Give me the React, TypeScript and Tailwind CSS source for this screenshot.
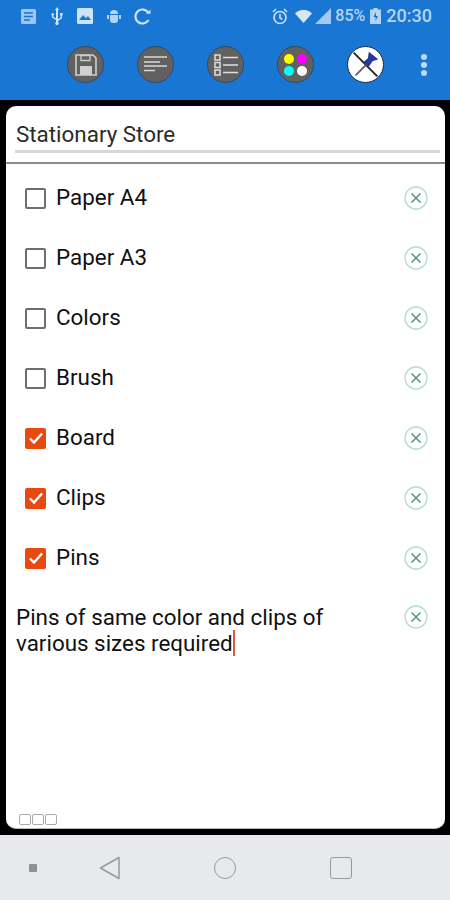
import React from "react";

const items = [
  { label: "Paper A4", done: false },
  { label: "Paper A3", done: false },
  { label: "Colors", done: false },
  { label: "Brush", done: false },
  { label: "Board", done: true },
  { label: "Clips", done: true },
  { label: "Pins", done: true },
];

function RemoveIcon() {
  return (
    <svg width="24" height="24" viewBox="0 0 24 24" fill="none" className="shrink-0">
      <circle cx="12" cy="12" r="11" stroke="#b5dcd3" strokeWidth="1.3" />
      <path d="M7.5 7.5l9 9M16.5 7.5l-9 9" stroke="#4f9488" strokeWidth="1.5" />
    </svg>
  );
}

function CheckBox({ done }: { done: boolean }) {
  if (done) {
    return (
      <div className="w-[21px] h-[21px] rounded-[2px] bg-[#e8490f] flex items-center justify-center">
        <svg width="16" height="14" viewBox="0 0 16 14" fill="none">
          <path d="M2 7.5l4 4 8-9" stroke="#fff" strokeWidth="2.4" />
        </svg>
      </div>
    );
  }
  return <div className="w-[21px] h-[21px] rounded-[2px] border-2 border-[#6e6e6e] bg-white" />;
}

function RoundButton({ children }: { children: React.ReactNode }) {
  return (
    <div className="w-[37px] h-[37px] rounded-full bg-[#616161] border border-[#34495e] flex items-center justify-center">
      {children}
    </div>
  );
}

function StatusBar() {
  return (
    <div className="h-[32px] flex items-center justify-between pl-[20px] pr-[18px] text-[#b4d4f4]">
      <div className="flex items-center gap-[13px]">
        <svg width="17" height="17" viewBox="0 0 17 17" fill="none">
          <rect x="1" y="1" width="15" height="15" rx="1.5" fill="#9cc6f0" />
          <path d="M4 5h9M4 8.5h9M4 12h6" stroke="#1976d2" strokeWidth="1.3" />
        </svg>
        <svg width="14" height="18" viewBox="0 0 14 18" fill="#d0e4f8">
          <path d="M7 0l2 3H8v9.2l2.6-1.8V8.6H10V6h2.6v2.6H12v2.6L8 14v1a1.7 1.7 0 1 1-2 0v-2L2 10.4V8.6a1.3 1.3 0 1 1 1.3 0v1.2L6 11.5V3H5z" />
        </svg>
        <svg width="16" height="16" viewBox="0 0 16 16">
          <rect width="16" height="16" rx="1.5" fill="#cfe3f7" />
          <path d="M2 12l4-5 3 3 2-2 3 4z" fill="#1976d2" />
        </svg>
        <svg width="14" height="14" viewBox="0 0 14 14" fill="#b4d4f4" className="ml-[1px]">
          <path d="M3 5a4 4 0 0 1 8 0zM0 6h2v4H0zM12 6h2v4h-2zM3 6h8v5a3 3 0 0 1-3 3H6a3 3 0 0 1-3-3z" />
        </svg>
        <svg width="17" height="17" viewBox="0 0 17 17" fill="none">
          <path d="M14.5 5A7 7 0 1 0 14.5 12" stroke="#d0e4f8" strokeWidth="2.2" />
          <path d="M12 5.8h4.5V1.5z" fill="#d0e4f8" />
        </svg>
      </div>
      <div className="flex items-center font-['Roboto',sans-serif]">
        <svg width="16" height="17" viewBox="0 0 16 17" fill="none" className="mr-[7px]">
          <circle cx="8" cy="9.5" r="6" stroke="#cfe3f7" strokeWidth="1.6" />
          <path d="M8 6v4l2.4 1.4M1 4l3-3M15 4l-3-3" stroke="#cfe3f7" strokeWidth="1.5" />
        </svg>
        <svg width="17" height="13" viewBox="0 0 17 13" fill="#d6e7f8" className="mr-[3px]">
          <path d="M0 3.5C4.5-1.2 12.5-1.2 17 3.5L8.5 13z" />
        </svg>
        <svg width="16" height="16" viewBox="0 0 16 16" fill="#a3c9f0" className="mr-[4px]">
          <path d="M0 16L16 0v16z" />
        </svg>
        <span className="text-[16px] font-medium leading-none mr-[5px]">85%</span>
        <svg width="11" height="16" viewBox="0 0 11 16" fill="#b4d4f4" className="mr-[5px]">
          <path d="M3.500 0h4v1.500H11V16H0V1.500h3.500zM6 4L3.500 9H5.500V13L8 8H6z" />
        </svg>
        <span className="text-[18px] font-medium leading-none">20:30</span>
      </div>
    </div>
  );
}

function Toolbar() {
  return (
    <div className="h-[68px] flex items-start pt-[14px] pl-[67px] pr-[23px]">
      <div className="flex gap-[33px]">
        <RoundButton>
          <svg width="24" height="24" viewBox="0 0 24 24" fill="none">
            <path d="M2 2h17l3 3v17H2z" stroke="#d0d0d0" strokeWidth="1.6" />
            <path d="M7 2.500h9v5H7z" stroke="#d0d0d0" strokeWidth="1.300" />
            <rect x="6" y="13" width="12" height="9" fill="#d0d0d0" />
          </svg>
        </RoundButton>
        <RoundButton>
          <svg width="26" height="20" viewBox="0 0 26 20" fill="none" stroke="#d8d8d8" strokeWidth="1.500">
            <path d="M1 2h23M1 7h16M1 11h23M1 15.500h11" />
          </svg>
        </RoundButton>
        <RoundButton>
          <svg width="26" height="24" viewBox="0 0 26 24" fill="none" stroke="#e0e0e0" strokeWidth="1.500">
            <rect x="2" y="2" width="5" height="5" />
            <rect x="2" y="9.500" width="5" height="5" />
            <rect x="2" y="17" width="5" height="5" />
            <path d="M10 4.500h15M10 12h15M10 19.500h15" />
          </svg>
        </RoundButton>
        <RoundButton>
          <div className="grid grid-cols-2 gap-x-[3px] gap-y-[2px]">
            <div className="w-[10px] h-[10px] rounded-full bg-[#ffff00]" />
            <div className="w-[10px] h-[10px] rounded-full bg-[#ff00ff]" />
            <div className="w-[10px] h-[10px] rounded-full bg-[#00ffff]" />
            <div className="w-[10px] h-[10px] rounded-full bg-white" />
          </div>
        </RoundButton>
        <div className="w-[37px] h-[37px] rounded-full bg-white border border-[#1a2a44] flex items-center justify-center overflow-hidden">
          <svg width="37" height="37" viewBox="0 0 37 37" fill="none">
            <path d="M6 6l25 25" stroke="#222" strokeWidth="2" />
            <path d="M8 30l11-11" stroke="#666" strokeWidth="2" />
            <path d="M22 5l10 8-6 2-4 6-6-5 5-4z" fill="#24389c" />
          </svg>
        </div>
      </div>
      <div className="ml-auto mt-[8px] flex flex-col gap-[2px]">
        <div className="w-[6px] h-[6px] rounded-full bg-[#bcd9f5]" />
        <div className="w-[6px] h-[6px] rounded-full bg-[#bcd9f5]" />
        <div className="w-[6px] h-[6px] rounded-full bg-[#bcd9f5]" />
      </div>
    </div>
  );
}

function NavBar() {
  return (
    <div className="h-[65px] bg-[#e8e9ec] flex items-center pl-[29px] pr-[98px] justify-between">
      <div className="w-[8px] h-[8px] rounded-[1px] bg-[#8f9094]" />
      <svg width="22" height="24" viewBox="0 0 22 24" fill="none" className="ml-[28px]">
        <path d="M20 1.500v21L1.500 12z" stroke="#999" strokeWidth="1.500" strokeLinejoin="round" />
      </svg>
      <div className="w-[22px] h-[22px] rounded-full border-[1.5px] border-[#999] ml-[60px]" />
      <div className="w-[22px] h-[22px] rounded-[3px] border-[1.5px] border-[#999] ml-[60px]" />
    </div>
  );
}

export default function App() {
  return (
    <div className="w-[450px] h-[900px] bg-black flex flex-col overflow-hidden font-['Roboto',sans-serif]">
      <div className="h-[100px] bg-[#1976d2]">
        <StatusBar />
        <Toolbar />
      </div>

      <div className="flex-1 pl-[6px] pr-[5px] py-[6px] min-h-0">
        <div className="h-full bg-white rounded-[10px] border-b border-[#bbb] flex flex-col relative">
          {/* Titel */}
          <div className="h-[58px] border-b-2 border-[#8a8a8a] pl-[9px] pr-[5px] pt-[14px]">
            <div className="border-b-[3px] border-[#d8d8d8] pb-[1px] pl-[1px] text-[22.4px] leading-[29px] text-[#2b2b2b]">
              Stationary Store
            </div>
          </div>

          {/* Liste */}
          <div className="flex flex-col pt-[4px]">
            {items.map((item) => (
              <div key={item.label} className="h-[60px] flex items-center pl-[19px] pr-[17px]">
                <CheckBox done={item.done} />
                <span className="ml-[10px] flex-1 text-[22.4px] text-[#111]">{item.label}</span>
                <RemoveIcon />
              </div>
            ))}
          </div>

          {/* Notiz */}
          <div className="flex items-start pl-[10px] pr-[17px] pt-[16px]">
            <div className="flex-1 text-[22.4px] leading-[26px] text-[#111]">
              Pins of same color and clips of
              <br />
              various sizes required
              <span className="inline-block w-[2px] h-[26px] bg-[#e2583a] align-top" />
            </div>
            <div className="mt-[1px]">
              <RemoveIcon />
            </div>
          </div>

          <div className="absolute left-[13px] bottom-[3px] flex gap-[1px]">
            <div className="w-[12px] h-[11px] rounded-[2px] border border-[#aaa]" />
            <div className="w-[12px] h-[11px] rounded-[2px] border border-[#aaa]" />
            <div className="w-[12px] h-[11px] rounded-[2px] border border-[#aaa]" />
          </div>
        </div>
      </div>

      <NavBar />
    </div>
  );
}
